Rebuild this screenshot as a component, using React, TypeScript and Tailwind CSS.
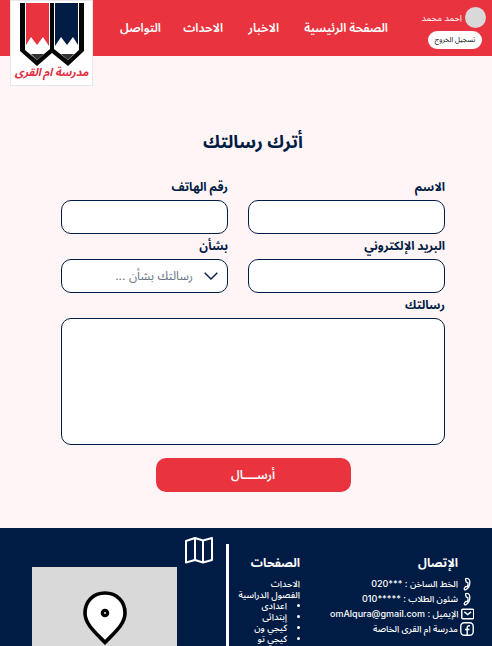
import type { ReactNode } from "react";

const navLinks = [
  { text: "الصفحة الرئيسية", width: "w-[84px]" },
  { text: "الاخبار", width: "w-[31px]" },
  { text: "الاحداث", width: "w-[37px]" },
  { text: "التواصل", width: "w-[41px]" },
];
const classes = ["اعدادى", "إبتدائى", "كيجي ون", "كيجي تو"];

function Logo() {
  return (
    <a
      href="#home"
      aria-label="مدرسة ام القرى"
      className="flex h-[86px] w-[83px] shrink-0 flex-col items-center border border-gray-200 bg-white"
    >
      <svg viewBox="0 0 64 63" className="mt-[2px] h-[63px] w-16 shrink-0" aria-hidden="true">
        <path d="M0 0V48L17 63L32 50L48 63L64 48V0Z" fill="#050608" />
        <path d="M5 0h25v46L17 57L5 47Z" fill="#fff" />
        <path d="M34 0h25v47L48 57L34 46Z" fill="#fff" />
        <path d="M6 0h23v43L23 34L17 42L11 34L6 42Z" fill="#e93440" />
        <path d="M35 0h23v42L53 34L47 42L41 34L35 43Z" fill="#001b44" />
        <path d="M11 51h13L17 57Z" fill="#333" />
        <path d="M41 51h13L48 57Z" fill="#333" />
      </svg>
      <span className="-mt-1 whitespace-nowrap text-[11px] leading-5 font-bold text-[#e12d3c] italic">مدرسة ام القرى</span>
    </a>
  );
}

function Field({ id, label, children }: { id: string; label: string; children: ReactNode }) {
  return (
    <div className="flex flex-col">
      <label htmlFor={id} className="h-[25px] text-xs leading-6 font-bold">
        {label}
      </label>
      {children}
    </div>
  );
}

function PhoneIcon() {
  return (
    <svg viewBox="0 0 14 14" className="h-[14px] w-[14px]" fill="none" stroke="currentColor" strokeWidth="1.3" strokeLinejoin="round" aria-hidden="true">
      <path d="M5.500 1.800C7.500 .8 9.500 1.800 9.800 4.500C10.100 8 8.500 11 5.800 12.700C4.800 13.200 3.800 12.200 4.300 11.300L5.500 9.500L7.200 9.700C8 8.500 8.200 7 7.900 5.700L6.200 5Z" />
    </svg>
  );
}

function MailIcon() {
  return (
    <svg viewBox="0 0 14 12" className="h-3 w-[14px]" fill="none" stroke="currentColor" strokeWidth="1.5" aria-hidden="true">
      <rect x=".8" y="1" width="12.400" height="10" rx="1" />
      <path d="M3.500 3.800L7 6.500L10.500 3.800" />
    </svg>
  );
}

function FacebookIcon() {
  return (
    <svg viewBox="0 0 14 14" className="h-[14px] w-[14px]" fill="none" stroke="currentColor" strokeWidth="1.4" aria-hidden="true">
      <rect x=".8" y=".8" width="12.400" height="12.400" rx="3.500" />
      <path d="M10 3.800H9Q7.200 3.800 7.200 5.600V13M5 7.500H9.500" />
    </svg>
  );
}

const contacts = [
  { icon: <PhoneIcon />, text: "الخط الساخن : ***020" },
  { icon: <PhoneIcon />, text: "شئون الطلاب : *****010" },
  { icon: <MailIcon />, text: "الإيميل : omAlqura@gmail.com" },
  { icon: <FacebookIcon />, text: "مدرسة ام القرى الخاصة" },
];

export default function App() {
  const box = "block w-full rounded-[10px] border border-[#001b44] bg-white px-2 text-xs outline-none";
  return (
    <div
      dir="rtl"
      lang="ar"
      className="flex h-screen flex-col overflow-hidden bg-[#fff5f7] font-[Inter,'Noto_Sans_Arabic','Noto_Sans','DejaVu_Sans',sans-serif] text-[#001b44]"
    >
      <header className="flex h-14 shrink-0 items-start bg-[#e93440] pr-[6px] pl-[10px] text-white">
        <div className="flex w-[58px] shrink-0 flex-col gap-[3px] pt-[7px]">
          <div className="flex items-center gap-[3px] whitespace-nowrap">
            <span className="size-[21px] shrink-0 rounded-full bg-[#d9d9d9]" />
            <span className="text-[9px] leading-4">احمد محمد</span>
          </div>
          <button type="button" className="mr-1 h-[18px] w-[54px] rounded-full bg-white text-[7px] whitespace-nowrap text-black">
            تسجيل الخروج
          </button>
        </div>
        <nav className="flex h-14 grow items-center gap-[25px] pr-10 text-xs font-semibold whitespace-nowrap">
          {navLinks.map((link) => (
            <a key={link.text} href="#page" className={link.width}>{link.text}</a>
          ))}
        </nav>
        <Logo />
      </header>

      <main className="shrink-0 pt-[72px] pr-[47px] pb-9 pl-[61px]">
        <h1 className="text-center text-lg leading-7 font-bold">أترك رسالتك</h1>
        <form className="pt-[19px]">
          <div className="grid grid-cols-[197fr_167fr] gap-x-5">
            <Field id="name" label="الاسم">
              <input id="name" className={`${box} h-[34px]`} />
            </Field>
            <Field id="phone" label="رقم الهاتف">
              <input id="phone" type="tel" className={`${box} h-[34px]`} />
            </Field>
            <Field id="email" label="البريد الإلكتروني">
              <input id="email" type="email" className={`${box} h-[34px]`} />
            </Field>
            <Field id="subject" label="بشأن">
              <div className="relative">
                <select id="subject" defaultValue="" className={`${box} h-[34px] appearance-none pr-[34px] text-gray-500`}>
                  <option value="">رسالتك بشأن ...</option>
                </select>
                <svg viewBox="0 0 14 8" className="pointer-events-none absolute top-[13px] right-[10px] h-2 w-[14px]" fill="none" stroke="currentColor" strokeWidth="1.400" aria-hidden="true">
                  <path d="M.7.8L7 7L13.300.8" />
                </svg>
              </div>
            </Field>
          </div>
          <Field id="message" label="رسالتك">
            <textarea id="message" className={`${box} h-[127px] resize-none`} />
          </Field>
          <button type="submit" className="mx-auto mt-[13px] block h-[34px] w-[195px] rounded-[10px] bg-[#e93440] text-xs font-semibold text-white">
            أرســــال
          </button>
        </form>
      </main>

      <footer className="flex min-h-0 grow overflow-hidden bg-[#001b44] pr-[18px] pl-8 text-white">
        <section className="w-[144px] shrink-0 pt-[26px]">
          <h2 className="pr-4 text-xs leading-[18px] font-bold">الإتصال</h2>
          <ul className="pt-1 text-[9px] font-medium whitespace-nowrap">
            {contacts.map((item) => (
              <li key={item.text} className="flex h-[15px] items-center gap-[2px]">
                {item.icon}
                <span>{item.text}</span>
              </li>
            ))}
          </ul>
        </section>
        <section className="mt-4 h-[180px] w-[104px] shrink-0 border-l-3 border-white pt-[10px] pr-[30px]">
          <h2 className="text-xs leading-[18px] font-bold">الصفحات</h2>
          <ul className="pt-[6px] text-[9px] leading-[11px] font-medium whitespace-nowrap">
            <li>الاحداث</li>
            <li>الفصول الدراسية
              <ul className="list-disc pr-[13px]">
                {classes.map((item) => <li key={item}>{item}</li>)}
              </ul>
            </li>
          </ul>
        </section>
        <section className="flex grow items-start gap-2 pr-[13px]">
          <svg viewBox="0 0 28 28" className="mt-2 h-7 w-7 shrink-0" fill="none" stroke="currentColor" strokeWidth="2" strokeLinejoin="round" aria-hidden="true">
            <path d="M1 5L10 2L18 4.500L27 2V24L18 26.500L10 24L1 26.500ZM10 2V24M18 4.500V26.500" />
          </svg>
          <div className="mt-[39px] flex h-[140px] grow justify-center bg-[#d9d9d9] pt-6">
            <svg viewBox="0 0 44 54" className="h-[54px] w-11" aria-hidden="true">
              <path d="M22 2C10 2 2 10.500 2 22C2 33 12 41 22 51.500C32 41 42 33 42 22C42 10.500 34 2 22 2Z" fill="#fff" stroke="#000" strokeWidth="3.600" />
              <circle cx="22" cy="22" r="2.600" fill="#fff" stroke="#000" strokeWidth="3.400" />
            </svg>
          </div>
        </section>
      </footer>
    </div>
  );
}
